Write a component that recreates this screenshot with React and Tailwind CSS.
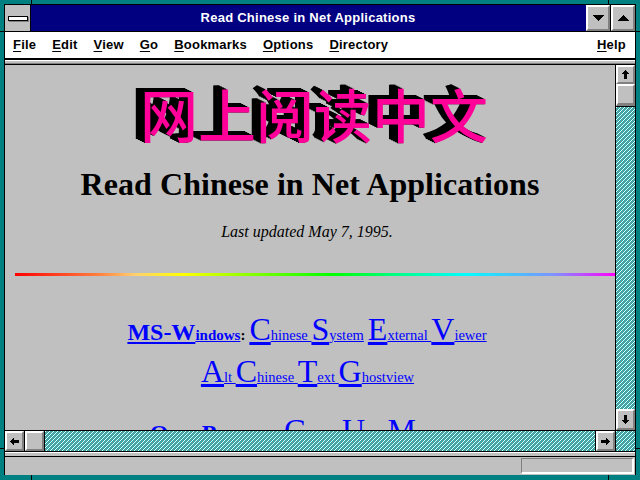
function Arrow({ d }) {
  return (
    <svg width="11" height="11" viewBox="0 0 11 11" shapeRendering="crispEdges" fill="#000">
      <path d={d} />
    </svg>
  );
}

function SysBtn({ children, className = "" }) {
  return (
    <div className={"flex items-center justify-center bg-[#c0c0c0] border-t-2 border-l-2 border-t-white border-l-white border-r-2 border-b-2 border-r-[#808080] border-b-[#808080] " + className}>
      {children}
    </div>
  );
}

function M({ u, r }) {
  return (
    <span>
      <span className="underline underline-offset-2">{u}</span>
      {r}
    </span>
  );
}

function L({ c, r }) {
  return (
    <>
      <span className="text-[32px] underline">{c}</span>
      <span className="text-[14.5px] underline">{r}</span>
    </>
  );
}

function B({ c, r }) {
  return (
    <>
      <span className="text-[24px] font-bold underline">{c}</span>
      <span className="text-[15px] font-bold underline">{r}</span>
    </>
  );
}

const C = "#10b4b4";
const W = "#f4f4f4";
const G = "#8a8a8a";
const tile = [
  [W, C, G, C],
  [C, G, C, W],
  [G, C, W, C],
  [C, W, C, G],
];

function Dither({ id }) {
  return (
    <svg className="block" width="100%" height="100%" shapeRendering="crispEdges">
      <defs>
        <pattern id={id} width="4" height="4" patternUnits="userSpaceOnUse">
          {tile.map((row, y) =>
            row.map((c, x) => <rect key={x + "-" + y} x={x} y={y} width="1" height="1" fill={c} />)
          )}
        </pattern>
      </defs>
      <rect width="100%" height="100%" fill={"url(#" + id + ")"} />
    </svg>
  );
}

function Tick({ className }) {
  return <div className={"absolute bg-black " + className} />;
}

export default function App() {
  return (
    <div className="relative w-[640px] h-[480px] overflow-hidden bg-[#008080] pt-[4px] px-[4px] pb-[5px] flex flex-col font-['Liberation_Sans',sans-serif]">
      <Tick className="left-[31px] top-0 w-[1px] h-[4px]" />
      <Tick className="left-[608px] top-0 w-[1px] h-[4px]" />
      <Tick className="left-[31px] bottom-0 w-[1px] h-[5px]" />
      <Tick className="left-[608px] bottom-0 w-[1px] h-[5px]" />
      <Tick className="left-0 top-[31px] h-[1px] w-[4px]" />
      <Tick className="right-0 top-[31px] h-[1px] w-[4px]" />
      <Tick className="left-0 top-[448px] h-[1px] w-[4px]" />
      <Tick className="right-0 top-[448px] h-[1px] w-[4px]" />

      <div className="flex-1 min-h-0 flex flex-col bg-[#c0c0c0] border-t border-x border-black">
        <div className="h-[27px] shrink-0 flex bg-[#000080] border-b border-black">
          <div className="w-[26px] bg-[#c0c0c0] border-r border-black flex items-center justify-center">
            <div className="w-[20px] h-[5px] bg-white border border-black shadow-[1px_1px_0_#808080]" />
          </div>
          <div className="flex-1 flex items-center justify-center text-white font-bold text-[13px] tracking-[0.25px] pr-[1px]">
            Read Chinese in Net Applications
          </div>
          <SysBtn className="w-[24px] h-[26px] border-l-1 border-l-white">
            <svg width="11" height="6" viewBox="0 0 11 6" shapeRendering="crispEdges"><path d="M0 0h11L5.5 6z" /></svg>
          </SysBtn>
          <div className="w-[1px] bg-black" />
          <SysBtn className="w-[24px] h-[26px]">
            <svg width="11" height="6" viewBox="0 0 11 6" shapeRendering="crispEdges"><path d="M0 6h11L5.5 0z" /></svg>
          </SysBtn>
        </div>
        <div className="h-[26px] shrink-0 bg-white flex items-center pl-[8px] pr-[9px] gap-[16px] text-[13px] font-bold text-black tracking-[0.2px]">
          <M u="F" r="ile" />
          <M u="E" r="dit" />
          <M u="V" r="iew" />
          <M u="G" r="o" />
          <M u="B" r="ookmarks" />
          <M u="O" r="ptions" />
          <M u="D" r="irectory" />
          <span className="ml-auto"><M u="H" r="elp" /></span>
        </div>
        <div className="h-[2px] shrink-0 bg-black" />
        <div className="h-[4px] shrink-0 bg-[#c0c0c0] border-t border-t-white border-b border-b-[#808080]" />
        <div className="h-[1px] shrink-0 bg-black" />

        <div className="flex-1 min-h-0 flex">
          <div className="flex-1 min-w-0 overflow-hidden flex flex-col items-center font-['Liberation_Serif','Noto_Sans_CJK_SC',serif]">
            <div className="mt-[14px] pl-[8px] h-[68px] leading-[68px] text-[58px] font-medium whitespace-nowrap text-[#ff0099] font-['Noto_Sans_CJK_SC',sans-serif] [text-shadow:-1px_0_0_#000,-2px_-1px_0_#000,-3px_-1px_0_#000,-4px_-2px_0_#000,-5px_-2px_0_#000,-6px_-3px_0_#000,-7px_-3px_0_#000,-8px_-4px_0_#000,-9px_-4px_0_#000]">
              网上阅读中文
            </div>
            <h1 className="mt-[19px] text-[32px] leading-[36px] font-bold text-black whitespace-nowrap tracking-[0.06px]">
              Read Chinese in Net Applications
            </h1>
            <p className="mt-[21px] pr-[6px] text-[16px] leading-[18px] italic text-black whitespace-nowrap">
              Last updated May 7, 1995.
            </p>
            <div className="mt-[32px] ml-[10px] self-stretch h-[3px] shrink-0 bg-[linear-gradient(to_right,#ff0000,#ff8040_14%,#ffd070_20%,#ffff00_28%,#80ff00_40%,#00ff00_53%,#00ff80_63%,#00ffff_75%,#8090ff_90%,#ff00ff)]" />
            <div className="mt-[35px] pr-[6px] whitespace-nowrap text-[#0000ff] leading-[36px]">
              <B c="MS-W" r="indows" />
              <span className="font-bold text-black text-[15px]">:</span>{" "}
              <L c="C" r="hinese " /><L c="S" r="ystem" /> <L c="E" r="xternal " /><L c="V" r="iewer" />
            </div>
            <div className="pr-[5px] whitespace-nowrap text-[#0000ff] leading-[36px]">
              <L c="A" r="lt " /><L c="C" r="hinese " /><L c="T" r="ext " /><L c="G" r="hostview" />
            </div>
            <div className="mt-[16px] pr-[6px] whitespace-nowrap text-[#0000ff] leading-[38px]">
              <span className="tracking-[0.5px]"><B c="O" r="ther " /><B c="P" r="latforms" /></span>
              <span className="font-bold text-black text-[15px]">:</span>{" "}
              <L c="G" r="annet " /><L c="U" r="nix " /><L c="M" r="acintosh" />
            </div>
          </div>
          <div className="w-[20px] shrink-0 flex flex-col border-l border-black">
            <SysBtn className="h-[19px] shrink-0">
              <Arrow d="M5 1h1v1h1v1h1v1h1v1H7v5H4V5H2V4h1V3h1V2h1z" />
            </SysBtn>
            <SysBtn className="h-[22px] shrink-0 border-t border-t-black border-b-[3px]" />
            <div className="flex-1 min-h-0 border-t border-black"><Dither id="dv" /></div>
            <SysBtn className="h-[21px] shrink-0">
              <Arrow d="M4 1h3v5h2v1H8v1H7v1H6v1H5V9H4V8H3V7H2V6h2z" />
            </SysBtn>
          </div>
        </div>

        <div className="h-[22px] shrink-0 flex border-y border-black">
          <SysBtn className="w-[19px]">
            <Arrow d="M1 5h1V4h1V3h1V2h1v2h5v3H5v2H4V8H3V7H2V6H1z" />
          </SysBtn>
          <div className="w-[1px] bg-black" />
          <SysBtn className="w-[19px]" />
          <div className="flex-1 min-w-0 border-x border-black"><Dither id="dh" /></div>
          <SysBtn className="w-[19px]">
            <Arrow d="M6 2h1v1h1v1h1v1h1v1H9v1H8v1H7v1H6V7H1V4h5z" />
          </SysBtn>
          <div className="w-[20px] border-l border-black"><Dither id="dc" /></div>
        </div>
        <div className="h-[5px] shrink-0 bg-[#c0c0c0] border-t border-t-white border-b border-b-black" />
        <div className="h-[18px] shrink-0 flex justify-end items-start pt-[1px] pr-[1px]">
          <div className="w-[113px] h-[16px] border-t border-l border-t-[#808080] border-l-[#808080] border-r-2 border-b-2 border-r-white border-b-white" />
        </div>
      </div>
    </div>
  );
}
